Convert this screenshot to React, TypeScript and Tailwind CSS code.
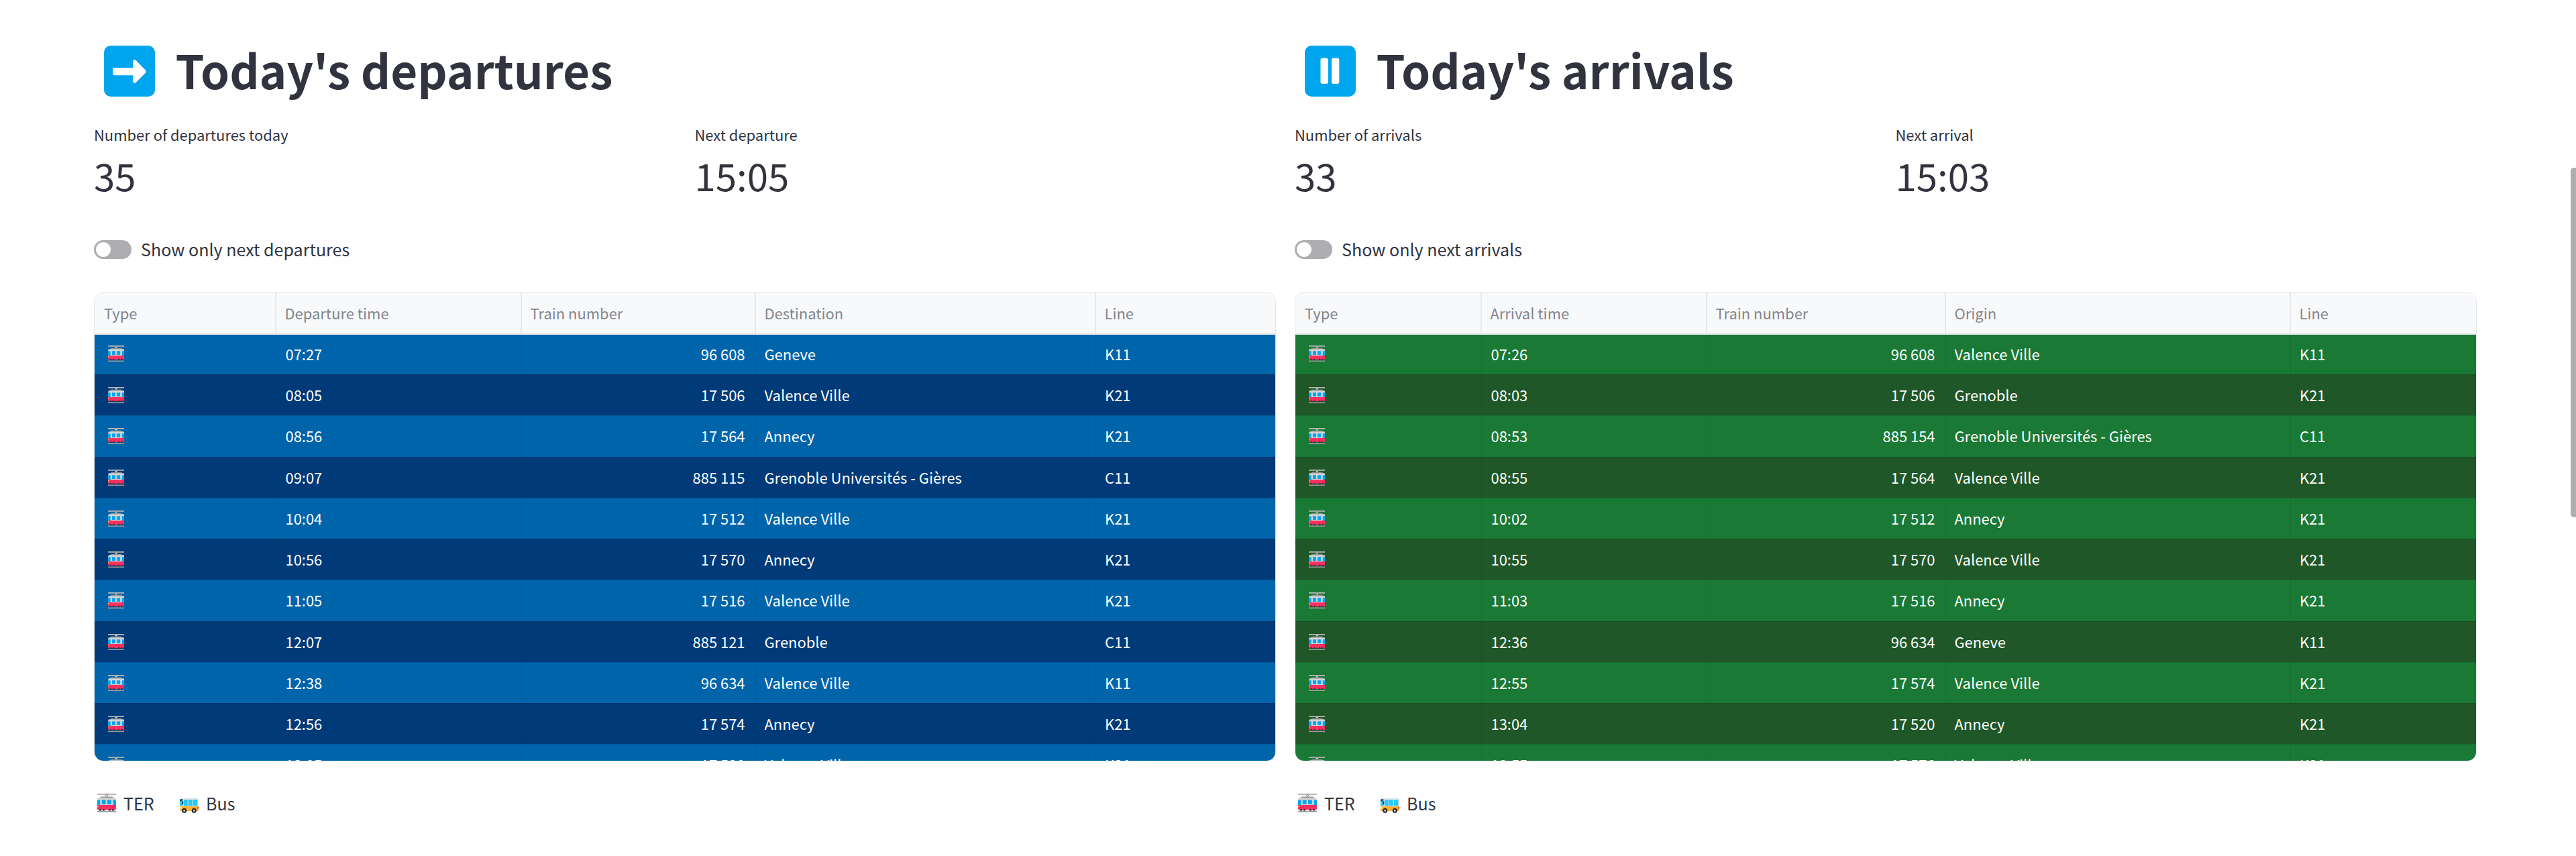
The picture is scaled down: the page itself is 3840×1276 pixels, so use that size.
const FONT = "font-['Noto_Sans_CJK_SC','Noto_Sans',sans-serif]";

type Row = [string, string, string, string];

function Tram({ className }: { className: string }) {
  return (
    <svg viewBox="0 0 28 28" className={className}>
      <rect x="0" y="0" width="28" height="1.9" rx=".5" fill="#b8b8b8" />
      <circle cx="14" cy="2.8" r="1.6" fill="#e8e8e8" stroke="#777" strokeWidth=".8" />
      <path d="M5 4.4h18l1 1.8H4z" fill="#8f8f8f" />
      <path d="M2 6h24q1.600 0 2 3v8H0V9q.4-3 2-3z" fill="#d3d3d3" />
      <path d="M0 10.500q0-1 1-1h2.600q.6 0 .6.6V17H0z" fill="#00a6ed" />
      <rect x="6.800" y="9.500" width="5.800" height="6.500" rx=".7" fill="#00a6ed" />
      <rect x="15" y="9.500" width="5.800" height="6.500" rx=".7" fill="#00a6ed" />
      <path d="M28 10.500q0-1-1-1h-2.600q-.6 0-.6.6V17H28z" fill="#00a6ed" />
      <path d="M0 17h28v5.600q0 1.400-1.400 1.400H1.400Q0 24 0 22.600z" fill="#fb2f60" />
      <circle cx=".9" cy="19" r="1" fill="#fcd53f" />
      <circle cx="4.500" cy="24.300" r="1.600" fill="#3a3340" />
      <circle cx="9.500" cy="24.300" r="1.600" fill="#3a3340" />
      <circle cx="18.500" cy="24.300" r="1.600" fill="#3a3340" />
      <circle cx="23.500" cy="24.300" r="1.600" fill="#3a3340" />
      <rect x="0" y="25.700" width="28" height="1.900" fill="#9b9b9b" />
    </svg>
  );
}

function Bus({ className }: { className: string }) {
  return (
    <svg viewBox="0 0 28 22" className={className}>
      <path d="M2 0h25q1 0 1 1v11H0V2q0-2 2-2z" fill="#e1e4ea" />
      <path d="M0 3q0-2 2-2h2.500v10H0z" fill="#26c9fc" />
      <rect x="6" y="2" width="5.800" height="9.200" rx=".6" fill="#26c9fc" />
      <rect x="12.800" y="2" width="6" height="9.200" rx=".6" fill="#26c9fc" />
      <rect x="19.800" y="2" width="6.500" height="9.200" rx=".6" fill="#26c9fc" />
      <path d="M0 3q0-1.500 1.500-1.500H4V3.500H1.500V4.500H0z" fill="#212121" />
      <rect x="3.600" y="4.200" width="1.700" height="5" rx=".8" fill="#212121" />
      <path d="M0 11.500q2-.8 4 .4h24v5.600q0 1.500-1.500 1.500h-25Q0 19 0 17.500z" fill="#ffb02e" />
      <path d="M0 12h1.500q1.300 0 1.300 2t-1.300 2H0z" fill="#fcec6f" />
      <rect x="26.200" y="12.500" width="1.800" height="3.600" rx=".8" fill="#f8312f" />
      <circle cx="6.700" cy="18.200" r="3.500" fill="#212121" />
      <circle cx="6.700" cy="18.200" r="1.500" fill="#d3d3d3" />
      <circle cx="21.300" cy="18.200" r="3.500" fill="#212121" />
      <circle cx="21.300" cy="18.200" r="1.500" fill="#d3d3d3" />
    </svg>
  );
}

function ArrowTile() {
  return (
    <svg viewBox="0 0 76 76" className="size-[76px]">
      <rect width="76" height="76" rx="10" fill="#00a6ed" />
      <path d="M15.800 33h27.500V23.500q.4-3.200 3.600-2.200L62 36.800q1.400 1.900 0 3.800L46.900 55.700q-3.200 1-3.600-2.200v-9.200H15.800q-2.500 0-2.500-2.500v-6.300Q13.300 33 15.800 33z" fill="#fff" />
    </svg>
  );
}

function PauseTile() {
  return (
    <svg viewBox="0 0 76 76" className="size-[76px]">
      <rect width="76" height="76" rx="10" fill="#00a6ed" />
      <rect x="23.500" y="18.500" width="11.300" height="38.500" rx="3" fill="#fff" />
      <rect x="40" y="18.500" width="11.300" height="38.500" rx="3" fill="#fff" />
    </svg>
  );
}

function Metric({ label, value }: { label: string; value: string }) {
  return (
    <div className="w-[895.500px] shrink-0">
      <div className="h-[42px] text-[21.940px] leading-[43px]">{label}</div>
      <div className="h-[78px] text-[56.400px] leading-[79px]">{value}</div>
    </div>
  );
}

interface PanelProps {
  icon: React.ReactNode;
  title: string;
  metrics: [string, string][];
  toggle: string;
  headers: string[];
  cols: string;
  light: string;
  dark: string;
  rows: Row[];
}

function Panel({ icon, title, metrics, toggle, headers, cols, light, dark, rows }: PanelProps) {
  return (
    <section className="w-[1762px] shrink-0">
      <h1 className="flex h-[110px] items-center pl-[15px] text-[69.050px] font-bold">
        {icon}
        <span className="ml-[30.500px] h-[110px] leading-[104px]">{title}</span>
      </h1>
      <div className="mt-[18px] flex">
        {metrics.map(([l, v]) => (
          <Metric key={l} label={l} value={v} />
        ))}
      </div>
      <div className="mt-[52px] flex h-[42px] items-center">
        <div className="h-[28px] w-[56px] rounded-full bg-[#adadb2] p-[3px]">
          <div className="size-[22px] rounded-full bg-white" />
        </div>
        <div className="ml-[14px] h-[42px] text-[25.070px] leading-[40px]">{toggle}</div>
      </div>
      <div className="mt-[42px] h-[700px] overflow-hidden rounded-[14px] border border-[#e6e7ea] text-[21.940px]">
        <div className={`grid h-[63px] border-b-2 border-[#e3e5e8] bg-[#f8f9fb] leading-[61px] text-[#83858e] ${cols}`}>
          {headers.map((h, i) => (
            <div key={h} className={i === 0 ? "border-r-2 border-[#e6e8eb] pl-[14px]" : i < 4 ? "border-r-2 border-[#e6e8eb] pl-[12.500px]" : "pl-[12.500px]"}>
              {h}
            </div>
          ))}
        </div>
        <div className="-mt-[2.250px]">
          {rows.map((r, i) => (
            <div
              key={i}
              className={`grid h-[61.250px] text-white ${cols} ${i % 2 ? dark : light} ${i === 0 ? "leading-[61.250px] [clip-path:inset(2.250px_0_0_0)]" : "border-t border-black/10 leading-[60px]"}`}
            >
              <div className="border-r border-black/5 pt-[18px] pl-[19.500px]">
                <Tram className="size-[24.500px]" />
              </div>
              <div className="border-r border-black/5 pl-[13.500px]">{r[0]}</div>
              <div className="border-r border-black/5 pr-[15.500px] text-right">{r[1]}</div>
              <div className="border-r border-black/5 pl-[12.500px]">{r[2]}</div>
              <div className="pl-[13px]">{r[3]}</div>
            </div>
          ))}
        </div>
      </div>
      <div className="mt-[41px] flex h-[42px] items-center text-[25.070px] leading-[42px]">
        <Tram className="ml-[5px] size-[28px]" />
        <span className="ml-[11px] w-[84px]">TER</span>
        <Bus className="mt-[8px] h-[22px] w-[28px]" />
        <span className="ml-[11px]">Bus</span>
      </div>
    </section>
  );
}

const DEPARTURES: Row[] = [
  ["07:27", "96 608", "Geneve", "K11"],
  ["08:05", "17 506", "Valence Ville", "K21"],
  ["08:56", "17 564", "Annecy", "K21"],
  ["09:07", "885 115", "Grenoble Universités - Gières", "C11"],
  ["10:04", "17 512", "Valence Ville", "K21"],
  ["10:56", "17 570", "Annecy", "K21"],
  ["11:05", "17 516", "Valence Ville", "K21"],
  ["12:07", "885 121", "Grenoble", "C11"],
  ["12:38", "96 634", "Valence Ville", "K11"],
  ["12:56", "17 574", "Annecy", "K21"],
  ["13:05", "17 520", "Valence Ville", "K21"],
];

const ARRIVALS: Row[] = [
  ["07:26", "96 608", "Valence Ville", "K11"],
  ["08:03", "17 506", "Grenoble", "K21"],
  ["08:53", "885 154", "Grenoble Universités - Gières", "C11"],
  ["08:55", "17 564", "Valence Ville", "K21"],
  ["10:02", "17 512", "Annecy", "K21"],
  ["10:55", "17 570", "Valence Ville", "K21"],
  ["11:03", "17 516", "Annecy", "K21"],
  ["12:36", "96 634", "Geneve", "K11"],
  ["12:55", "17 574", "Valence Ville", "K21"],
  ["13:04", "17 520", "Annecy", "K21"],
  ["13:55", "17 576", "Valence Ville", "K21"],
];

export default function App() {
  return (
    <main className={`relative flex h-[1276px] w-[3840px] gap-[28px] overflow-hidden bg-white pt-[51px] pl-[140px] text-[#31333f] ${FONT}`}>
      <Panel
        icon={<ArrowTile />}
        title="Today's departures"
        metrics={[["Number of departures today", "35"], ["Next departure", "15:05"]]}
        toggle="Show only next departures"
        headers={["Type", "Departure time", "Train number", "Destination", "Line"]}
        cols="grid-cols-[271px_366px_349px_507px_1fr]"
        light="bg-[#0064ab]"
        dark="bg-[#003a78]"
        rows={DEPARTURES}
      />
      <Panel
        icon={<PauseTile />}
        title="Today's arrivals"
        metrics={[["Number of arrivals", "33"], ["Next arrival", "15:03"]]}
        toggle="Show only next arrivals"
        headers={["Type", "Arrival time", "Train number", "Origin", "Line"]}
        cols="grid-cols-[278px_336px_356px_514px_1fr]"
        light="bg-[#197935]"
        dark="bg-[#1f5728]"
        rows={ARRIVALS}
      />
      <div className="absolute top-[250px] right-0 h-[521px] w-[8px] rounded-l-[5px] bg-[#adadb2]" />
    </main>
  );
}
